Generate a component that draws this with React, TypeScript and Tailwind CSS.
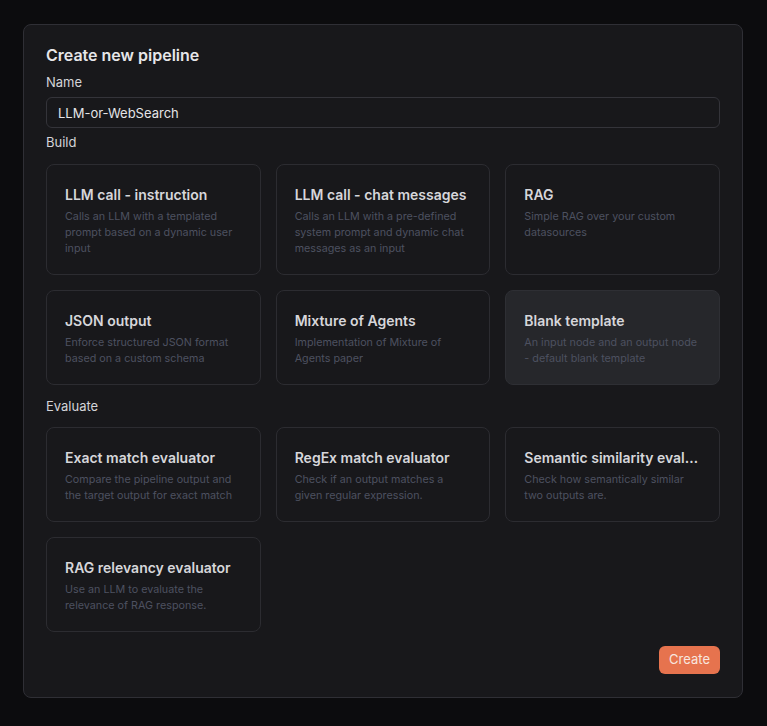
const buildTemplates = [
  {
    title: 'LLM call - instruction',
    desc: 'Calls an LLM with a templated prompt based on a dynamic user input',
  },
  {
    title: 'LLM call - chat messages',
    desc: 'Calls an LLM with a pre-defined system prompt and dynamic chat messages as an input',
  },
  { title: 'RAG', desc: 'Simple RAG over your custom datasources' },
  { title: 'JSON output', desc: 'Enforce structured JSON format based on a custom schema' },
  { title: 'Mixture of Agents', desc: 'Implementation of Mixture of Agents paper' },
  {
    title: 'Blank template',
    desc: 'An input node and an output node - default blank template',
    selected: true,
  },
];

const evalTemplates = [
  {
    title: 'Exact match evaluator',
    desc: 'Compare the pipeline output and the target output for exact match',
  },
  { title: 'RegEx match evaluator', desc: 'Check if an output matches a given regular expression.' },
  { title: 'Semantic similarity evaluator', desc: 'Check how semantically similar two outputs are.' },
  { title: 'RAG relevancy evaluator', desc: 'Use an LLM to evaluate the relevance of RAG response.' },
];

type Template = { title: string; desc: string; selected?: boolean };

function TemplateCard({ title, desc, selected }: Template) {
  return (
    <div
      className={
        'min-w-0 rounded-lg border px-[18px] pt-[19px] pb-[17px] ' +
        (selected ? 'border-[#2e2f34] bg-[#26272b]' : 'border-[#2c2c31] bg-[#18181b]')
      }
    >
      <div className="truncate text-[14px] leading-[22px] font-semibold text-[#d6d6da]">{title}</div>
      <p className="mt-[3px] text-[10.75px] leading-[16px] text-[#4d5160]">{desc}</p>
    </div>
  );
}

export default function App() {
  return (
    <div
      className="min-h-[726px] bg-[#0c0c0e] px-[23px] pt-[24px] pb-[28px]"
      style={{ fontFamily: 'Inter, "Noto Sans", sans-serif' }}
    >
      <div className="w-[720px] rounded-lg border border-[#2f2f35] bg-[#18181b] px-[22px] pt-[18px] pb-[23px]">
        <h2 className="text-[16px] leading-[24px] font-semibold text-[#e6e6e9]">Create new pipeline</h2>
        <label className="mt-[6px] block text-[13px] leading-[18px] text-[#d4d4d8]">Name</label>
        <input
          className="mt-[6px] block h-[31px] w-full rounded-md border border-[#34343a] bg-[#18181b] px-[11px] text-[13px] text-[#e4e4e7] outline-none"
          defaultValue="LLM-or-WebSearch"
        />
        <div className="mt-[5px] text-[13px] leading-[18px] text-[#d4d4d8]">Build</div>
        <div className="mt-[13px] grid grid-cols-3 gap-x-[15px] gap-y-[15px]">
          {buildTemplates.map((t) => (
            <TemplateCard key={t.title} {...t} />
          ))}
        </div>
        <div className="mt-[12px] text-[13px] leading-[18px] text-[#d4d4d8]">Evaluate</div>
        <div className="mt-[12px] grid grid-cols-3 gap-x-[15px] gap-y-[15px]">
          {evalTemplates.map((t) => (
            <TemplateCard key={t.title} {...t} />
          ))}
        </div>
        <div className="mt-[14px] flex justify-end">
          <button className="h-[28px] rounded-md bg-[#e6734e] px-[10px] text-[13px] text-[#f8e6df]">
            Create
          </button>
        </div>
      </div>
    </div>
  );
}
